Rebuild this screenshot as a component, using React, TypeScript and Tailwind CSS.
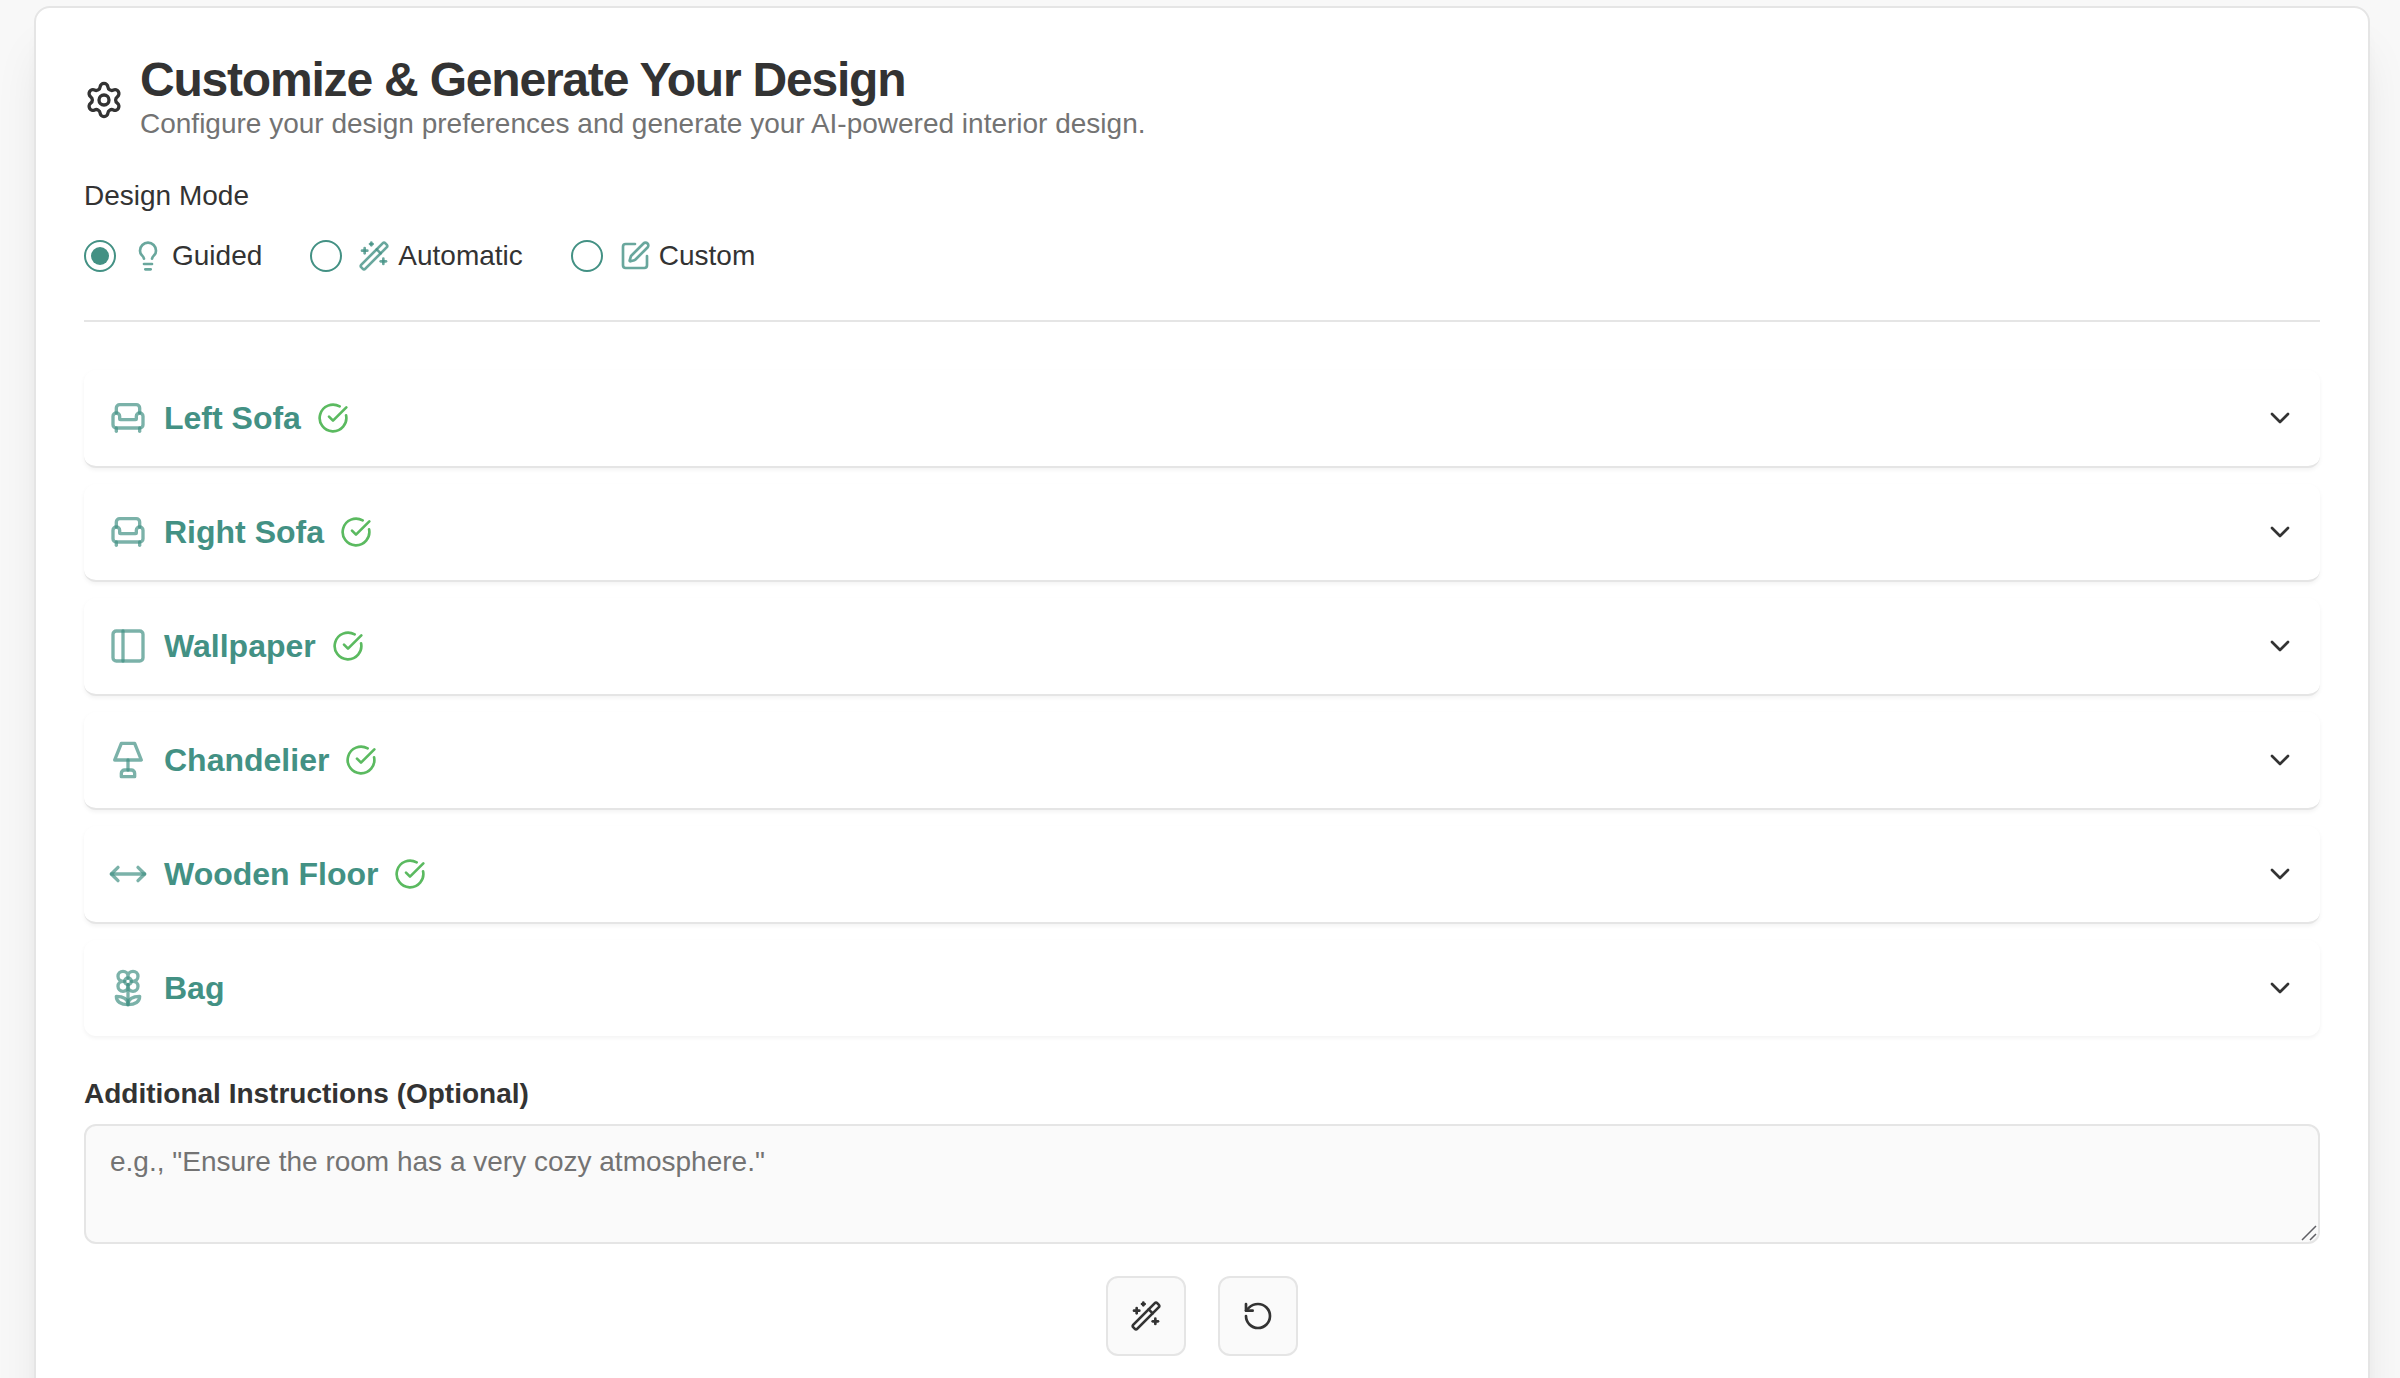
import { useState } from "react";
import type { ReactNode } from "react";
import {
  Armchair,
  ChevronDown,
  CircleCheckBig,
  Flower2,
  Lightbulb,
  MoveHorizontal,
  PanelLeft,
  RotateCcw,
  Settings,
  SquarePen,
  WandSparkles,
} from "lucide-react";

function LampIcon({ className }: { className?: string }) {
  return (
    <svg
      viewBox="0 0 24 24"
      fill="none"
      stroke="currentColor"
      strokeWidth={2}
      strokeLinecap="round"
      strokeLinejoin="round"
      className={className}
      aria-hidden="true"
    >
      <path d="M8 2h8l4 10H4L8 2Z" />
      <path d="M12 12v6" />
      <path d="M8 22v-2c0-1.1.9-2 2-2h4a2 2 0 0 1 2 2v2H8Z" />
    </svg>
  );
}

const MODES = [
  { id: "guided", label: "Guided", icon: Lightbulb },
  { id: "automatic", label: "Automatic", icon: WandSparkles },
  { id: "custom", label: "Custom", icon: SquarePen },
];

const ITEMS = [
  { name: "Left Sofa", icon: Armchair, done: true },
  { name: "Right Sofa", icon: Armchair, done: true },
  { name: "Wallpaper", icon: PanelLeft, done: true },
  { name: "Chandelier", icon: LampIcon, done: true },
  { name: "Wooden Floor", icon: MoveHorizontal, done: true },
  { name: "Bag", icon: Flower2, done: false },
];

function IconButton({ label, children }: { label: string; children: ReactNode }) {
  return (
    <button
      type="button"
      aria-label={label}
      className="flex size-20 items-center justify-center rounded-xl border-2 border-[#e5e5e5] bg-[#fafafa] hover:bg-[#f0f0f0]"
    >
      {children}
    </button>
  );
}

export default function App() {
  const [mode, setMode] = useState("guided");
  const [notes, setNotes] = useState("");

  return (
    <div className="h-screen overflow-hidden bg-[#f8f8f8] pt-1.5 pr-[30px] pl-[34px] font-['Liberation_Sans',Arial,sans-serif] text-[28px] text-[#333333]">
      <main className="rounded-2xl border-2 border-[#e5e5e5] bg-white p-12 shadow-[0_40px_50px_-10px_rgba(0,0,0,0.1),0_16px_20px_-12px_rgba(0,0,0,0.1)]">
        <header className="flex items-center gap-4">
          <Settings className="size-10 shrink-0" />
          <div>
            <h1 className="text-5xl leading-none font-bold tracking-tight">
              Customize &amp; Generate Your Design
            </h1>
            <p className="leading-10 text-[#737373]">
              Configure your design preferences and generate your AI-powered interior design.
            </p>
          </div>
        </header>

        <fieldset className="mt-8 border-b-2 border-[#e5e5e5] pb-12">
          <legend className="leading-10">Design Mode</legend>
          <div className="mt-6 flex gap-12">
            {MODES.map(({ id, label, icon: Icon }) => (
              <label key={id} className="flex h-8 cursor-pointer items-center gap-4">
                <input
                  type="radio"
                  name="design-mode"
                  value={id}
                  checked={mode === id}
                  onChange={() => setMode(id)}
                  className="grid size-8 appearance-none place-content-center rounded-full border-2 border-[#439184] before:size-[18px] before:rounded-full checked:before:bg-[#439184]"
                />
                <span className="flex items-center gap-2">
                  <Icon className="size-8 text-[#439184]/80" />
                  {label}
                </span>
              </label>
            ))}
          </div>
        </fieldset>

        <div className="mt-12 flex flex-col gap-4">
          {ITEMS.map(({ name, icon: Icon, done }) => (
            <div
              key={name}
              className="rounded-xl border-b-2 border-[#e5e5e5] bg-white shadow-[0_2px_4px_rgba(0,0,0,0.05)] last:border-b-0"
            >
              <button
                type="button"
                aria-expanded="false"
                className="flex h-24 w-full items-center gap-4 px-6 text-left"
              >
                <Icon className="size-10 text-[#439184]/70" />
                <span className="text-[32px] font-bold text-[#439184]">{name}</span>
                {done && <CircleCheckBig className="size-8 text-[#5bba60]" />}
                <ChevronDown className="ml-auto size-8" />
              </button>
            </div>
          ))}
        </div>

        <label htmlFor="instructions" className="mt-11 block leading-7 font-bold">
          Additional Instructions (Optional)
        </label>
        <div className="relative mt-4">
          <textarea
            id="instructions"
            value={notes}
            onChange={(e) => setNotes(e.target.value)}
            placeholder={'e.g., "Ensure the room has a very cozy atmosphere."'}
            className="block h-30 w-full resize-none rounded-xl border-2 border-[#e5e5e5] bg-[#fafafa] px-6 py-4 leading-10 placeholder:text-[#737373]"
          />
          {/* Resize grip */}
          <svg
            viewBox="0 0 16 16"
            fill="none"
            stroke="#5f5f64"
            strokeWidth={1.5}
            className="pointer-events-none absolute right-[3px] bottom-[3px] size-4"
            aria-hidden="true"
          >
            <path d="M1 15 15 1M9 15l6-6" />
          </svg>
        </div>

        <div className="mt-8 flex justify-center gap-8">
          <IconButton label="Generate design">
            <WandSparkles className="size-8" />
          </IconButton>
          <IconButton label="Reset">
            <RotateCcw className="size-8" />
          </IconButton>
        </div>
      </main>
    </div>
  );
}
